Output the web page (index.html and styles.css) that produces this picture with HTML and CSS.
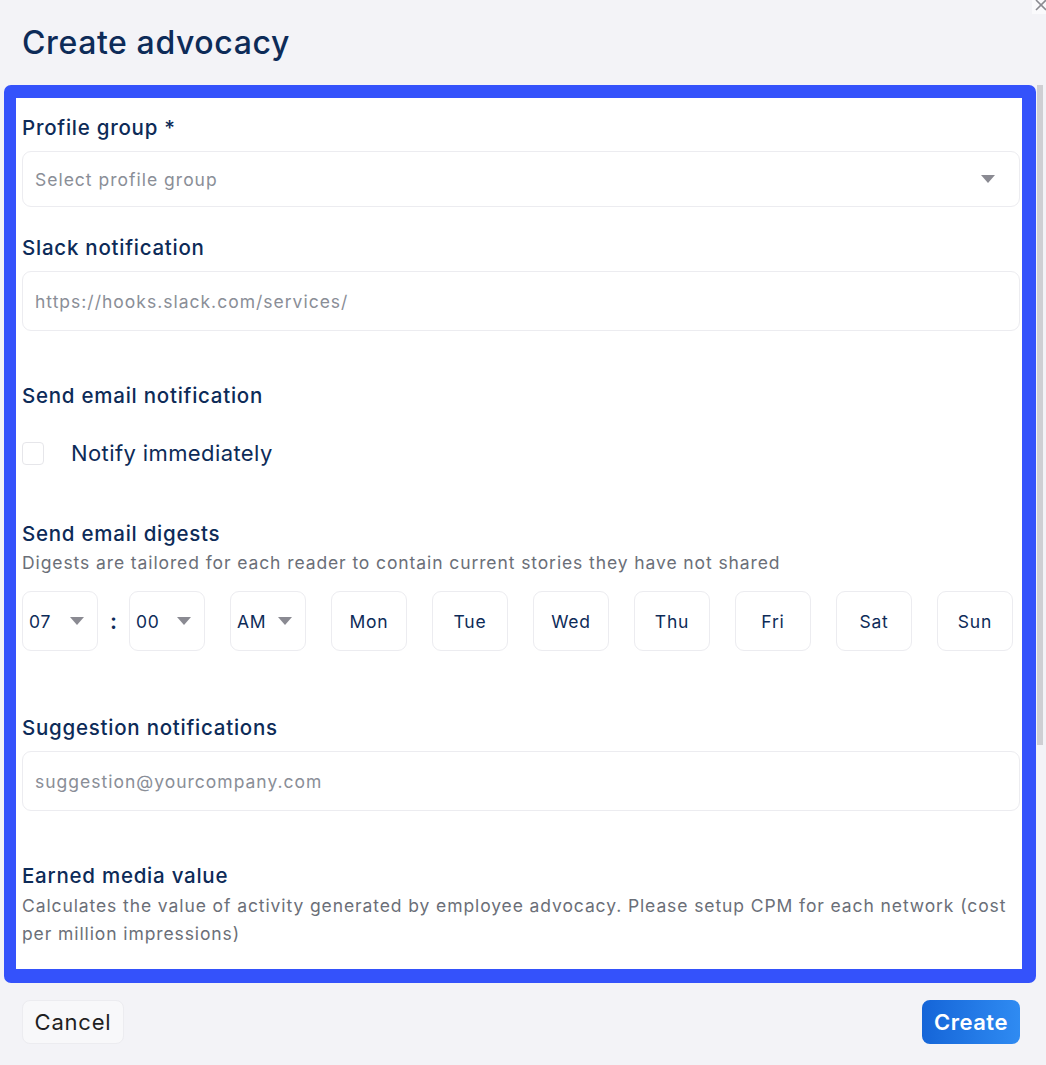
FILE: index.html
```html
<!DOCTYPE html>
<html lang="en">
<head>
<meta charset="utf-8">
<title>Create advocacy</title>
<link rel="stylesheet" href="styles.css">
</head>
<body>
<div class="modal">
  <button class="close" aria-label="Close">
    <svg width="12" height="12" viewBox="0 0 12 12"><path d="M1 1 L11 11 M11 1 L1 11" stroke="#8a8a90" stroke-width="1.6" fill="none"/></svg>
  </button>
  <h1 class="title">Create advocacy</h1>
  <div class="body-row">
    <div class="panel">
      <div class="panel-inner">
        <label class="label first">Profile group *</label>
        <div class="field select">
          <span class="placeholder">Select profile group</span>
          <span class="caret"></span>
        </div>

        <label class="label sec">Slack notification</label>
        <div class="field input"><span class="placeholder">https://hooks.slack.com/services/</span></div>

        <label class="label sec-lg">Send email notification</label>
        <div class="check-row">
          <span class="checkbox"></span>
          <span class="check-text">Notify immediately</span>
        </div>

        <label class="label sec-xl">Send email digests</label>
        <p class="help">Digests are tailored for each reader to contain current stories they have not shared</p>
        <div class="time-row">
          <div class="time-group">
            <div class="box drop"><span>07</span><span class="caret sm"></span></div>
            <span class="colon">:</span>
            <div class="box drop"><span>00</span><span class="caret sm"></span></div>
          </div>
          <div class="box drop"><span>AM</span><span class="caret sm"></span></div>
          <div class="box day">Mon</div>
          <div class="box day">Tue</div>
          <div class="box day">Wed</div>
          <div class="box day">Thu</div>
          <div class="box day">Fri</div>
          <div class="box day">Sat</div>
          <div class="box day">Sun</div>
        </div>

        <label class="label sec-xxl">Suggestion notifications</label>
        <div class="field input"><span class="placeholder">suggestion@yourcompany.com</span></div>

        <label class="label sec-lg">Earned media value</label>
        <p class="help two">Calculates the value of activity generated by employee advocacy. Please setup CPM for each network (cost per million impressions)</p>
      </div>
    </div>
    <div class="scroll-track"><div class="scroll-thumb"></div></div>
  </div>
  <div class="footer">
    <button class="btn cancel">Cancel</button>
    <button class="btn create">Create</button>
  </div>
</div>
</body>
</html>
```
FILE: styles.css
```css
* { box-sizing: border-box; }
html, body { margin: 0; padding: 0; }
body {
  background: #f3f3f7;
  font-family: Inter, "Noto Sans", sans-serif;
  color: #0c2a58;
  width: 1046px;
  height: 1065px;
  overflow: hidden;
}
.modal { position: relative; height: 1065px; }
.close {
  position: absolute;
  top: -4px;
  right: -4px;
  width: 18px;
  height: 18px;
  border: none;
  background: #fafafc;
  padding: 0;
  display: flex;
  align-items: center;
  justify-content: center;
}
.title {
  margin: 0;
  padding: 23px 0 0 22px;
  height: 85px;
  font-size: 32px;
  line-height: 40px;
  font-weight: 450;
  letter-spacing: 0.6px;
  color: #0d2b58;
}
.body-row { display: flex; align-items: flex-start; }
.panel {
  width: 1032px;
  margin-left: 4px;
  height: 898px;
  border-style: solid;
  border-color: #3452fb;
  border-width: 13px 14px 14px 12px;
  border-radius: 7px;
  background: #fff;
  overflow: hidden;
}
.panel-inner { padding: 16px 2px 0 6px; }
.scroll-track { width: 6px; margin-left: 1px; height: 660px; }
.scroll-thumb { width: 6px; height: 660px; background: #cfcfd3; }

.label {
  display: block;
  font-size: 20.5px;
  line-height: 28px;
  font-weight: 450;
  letter-spacing: 0.75px;
  color: #0d2b58;
}
.label.first { margin-top: 0; }
.label.sec { margin-top: 27px; }
.label.sec-lg { margin-top: 51px; }
.label.sec-xl { margin-top: 53px; }
.label.sec-xxl { margin-top: 63px; }

.field {
  margin-top: 9px;
  border: 1px solid #ececf0;
  border-radius: 9px;
  display: flex;
  align-items: center;
  padding: 0 24px 0 12px;
}
.field.select { height: 56px; justify-content: space-between; }
.field.input { height: 60px; }
.placeholder { font-size: 17.5px; letter-spacing: 1px; color: #8a8e97; }

.caret {
  width: 0; height: 0;
  border-left: 7px solid transparent;
  border-right: 7px solid transparent;
  border-top: 8px solid #8a8a92;
}

.check-row {
  margin-top: 29px;
  display: flex;
  align-items: center;
  height: 28px;
}
.checkbox {
  width: 22px; height: 23px;
  border: 1px solid #e6e6ea;
  border-radius: 4px;
  background: #fff;
}
.check-text { margin-left: 27px; font-size: 22px; letter-spacing: 0.4px; color: #0d2b58; }

.help {
  margin: 3px 0 0;
  font-size: 17.5px;
  line-height: 24px;
  letter-spacing: 0.9px;
  color: #6b6f78;
}
.help.two { margin-top: 2px; line-height: 28px; }

.time-row {
  margin-top: 16px;
  display: flex;
  gap: 25px;
}
.time-group { display: flex; }
.colon {
  width: 31px;
  text-align: center;
  font-size: 22px;
  line-height: 60px;
  font-weight: 600;
  color: #0d2b58;
}
.box {
  width: 76px;
  height: 60px;
  border: 1px solid #ececf0;
  border-radius: 9px;
  font-size: 17.5px;
  letter-spacing: 0.8px;
  color: #0d2b58;
  display: flex;
  align-items: center;
}
.box.drop { justify-content: space-between; padding: 0 13px 0 6px; }
.box.day { justify-content: center; }

.footer {
  display: flex;
  justify-content: space-between;
  padding: 17px 26px 0 22px;
}
.btn {
  height: 44px;
  border-radius: 8px;
  font-family: inherit;
  font-size: 22px;
  padding: 0;
}
.cancel {
  width: 102px;
  background: #f8f8fa;
  border: 1px solid #ececf0;
  color: #1f1f22;
  letter-spacing: 0.8px;
}
.create {
  width: 98px;
  border: none;
  color: #fff;
  font-weight: 600;
  letter-spacing: 0.5px;
  background: linear-gradient(90deg, #1565d8, #2f8bf2);
}
```
